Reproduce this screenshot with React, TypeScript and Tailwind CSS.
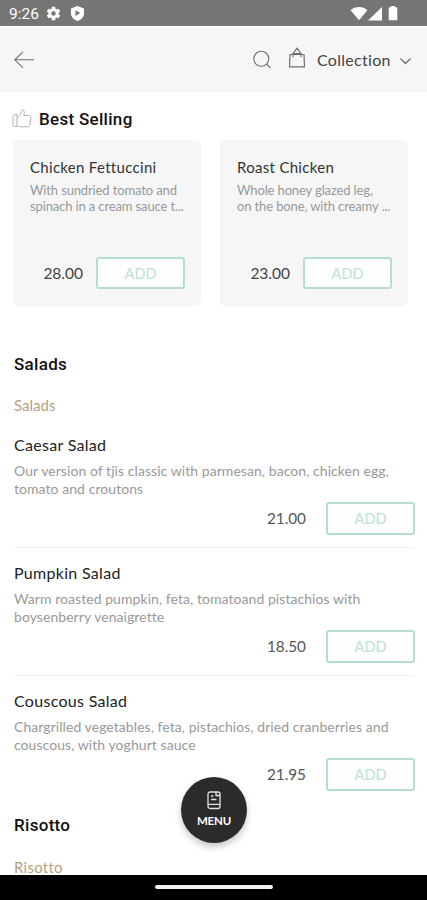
import React from 'react';

type Dish = {
  name: string;
  lines: string[];
  price: string;
};

const bestSelling: Dish[] = [
  { name: 'Chicken Fettuccini', lines: ['With sundried tomato and', 'spinach in a cream sauce t...'], price: '28.00' },
  { name: 'Roast Chicken', lines: ['Whole honey glazed leg,', 'on the bone, with creamy ...'], price: '23.00' },
];

const salads: Dish[] = [
  {
    name: 'Caesar Salad',
    lines: ['Our version of tjis classic with parmesan, bacon, chicken egg,', 'tomato and croutons'],
    price: '21.00',
  },
  {
    name: 'Pumpkin Salad',
    lines: ['Warm roasted pumpkin, feta, tomatoand pistachios with', 'boysenberry venaigrette'],
    price: '18.50',
  },
  {
    name: 'Couscous Salad',
    lines: ['Chargrilled vegetables, feta, pistachios, dried cranberries and', 'couscous, with yoghurt sauce'],
    price: '21.95',
  },
];

function StatusBar() {
  return (
    <div className="flex h-[26px] shrink-0 items-center bg-[#757575] pl-[9px] pr-[29px] pt-[2px] text-white">
      <span className="mt-[2px] w-[30px] font-['Roboto',sans-serif] text-[15.5px] leading-none">9:26</span>
      <svg className="ml-[6px] -mt-px" width="17" height="17" viewBox="0 0 24 24" fill="currentColor">
        <path d="M19.14 12.94a7.5 7.5 0 0 0 0-1.88l2.03-1.58a.5.5 0 0 0 .12-.61l-1.92-3.32a.5.5 0 0 0-.59-.22l-2.39.96a7 7 0 0 0-1.62-.94l-.36-2.54a.5.5 0 0 0-.48-.41h-3.84a.5.5 0 0 0-.47.41l-.36 2.54a7 7 0 0 0-1.62.94l-2.39-.96a.5.5 0 0 0-.59.22L2.74 8.87a.5.5 0 0 0 .12.61l2.03 1.58a7.5 7.5 0 0 0 0 1.88l-2.03 1.58a.5.5 0 0 0-.12.61l1.92 3.32c.12.22.37.29.59.22l2.39-.96c.5.38 1.03.7 1.62.94l.36 2.54c.05.24.24.41.48.41h3.84c.24 0 .44-.17.47-.41l.36-2.54a7 7 0 0 0 1.62-.94l2.39.96c.22.08.47 0 .59-.22l1.92-3.32a.5.5 0 0 0-.12-.61zM12 15.2a3.2 3.2 0 1 1 0-6.4 3.2 3.2 0 0 1 0 6.4z" />
      </svg>
      <svg className="ml-[8px] -mt-px" width="15" height="17" viewBox="0 0 15 17">
        <path d="M7.5 1 14 3.4v5.1c0 3.4-2.7 6.2-6.5 7.5C3.7 14.7 1 11.9 1 8.5V3.4z" fill="currentColor" />
        <path d="M5.5 5.3v5.6L10.3 8.1z" fill="#757575" />
      </svg>
      <div className="-mt-[2px] ml-auto flex items-center">
        <svg width="18" height="15" viewBox="0 0 18 15" fill="currentColor">
          <path d="M.6 4.2C3 2 5.8 1 9 1s6 1 8.4 3.2L9 14.3z" />
        </svg>
        <svg className="-ml-px" width="16" height="15" viewBox="0 0 16 15" fill="currentColor">
          <path d="M15 1v13.5H1z" />
        </svg>
        <svg className="ml-[5px]" width="10" height="16" viewBox="0 0 10 16" fill="currentColor">
          <path d="M3 1h4v1.3h1.400c.5 0 .9.400.9.900v11.200c0 .5-.4.900-.9.900H1.600a.9.900 0 0 1-.9-.9V3.200c0-.5.400-.9.900-.9H3z" />
        </svg>
      </div>
    </div>
  );
}

function Header() {
  return (
    <header className="flex h-[66px] shrink-0 items-center border-t border-[#fcfcfc] bg-[#f6f6f6] pl-[13px] pr-[15px] text-[#707070]">
      <svg width="22" height="20" viewBox="0 0 22 20" fill="none" stroke="currentColor" strokeWidth="1.1">
        <path d="M10 1.800 1.800 9.800l8.200 8M1.800 9.800H21" />
      </svg>
      <svg className="ml-auto" width="20" height="20" viewBox="0 0 20 20" fill="none" stroke="currentColor" strokeWidth="1.1">
        <circle cx="9.300" cy="8.800" r="7.500" />
        <path d="m14.500 14 4 4" />
      </svg>
      <svg className="-mt-[4px] ml-[16px]" width="18" height="21" viewBox="0 0 18 21" fill="none" stroke="currentColor" strokeWidth="1.2">
        <path d="M2 7.500h14l.5 12.300h-15z" />
        <path d="M5 10V6.500L9 1.300l4 5.200V10M5 6.500h8" />
      </svg>
      <span className="ml-[11px] w-[75px] text-[16px] leading-5 tracking-[0.3px] text-[#444]">Collection</span>
      <svg className="ml-[7px] mt-[3px]" width="13" height="9" viewBox="0 0 13 9" fill="none" stroke="currentColor" strokeWidth="1.3">
        <path d="m1.500 1.500 5 5 5-5" />
      </svg>
    </header>
  );
}

function ThumbIcon() {
  return (
    <svg width="20" height="19" viewBox="0 0 20 19" fill="none" stroke="#b0b0b0" strokeWidth="1" strokeLinejoin="round">
      <path d="M5 5.500H3.200A2.200 2.200 0 0 0 1 7.700v7.600a2.200 2.200 0 0 0 2.200 2.200H5z" />
      <path d="M5 8.500c2-.8 3.800-2.500 4-5 .1-1.600.5-2.600 1.500-2.600 1.900 0 2.200 3 1.300 5.600h4.700c1.600 0 2.600 1 2.400 2.400l-1 6.600c-.2 1.500-1.200 2.300-2.600 2.300H8.500c-1.500 0-2.500-.4-3.500-1.300" />
    </svg>
  );
}

function AddButton({ className = '' }: { className?: string }) {
  return (
    <button className={`w-[89px] rounded-[3px] border-2 border-[#b5decb] bg-[#fdfefd] text-[14.5px] text-[#bde3d1] ${className}`}>
      ADD
    </button>
  );
}

function BestCard({ dish }: { dish: Dish }) {
  return (
    <div className="flex h-[166px] w-[188px] flex-col rounded-[6px] border border-[#f4f4f4] bg-[#f6f6f6] pb-[16px] pl-[16px] pr-[15px] pt-[16px]">
      <h3 className="text-[15px] leading-5 tracking-[0.3px] text-[#333]">{dish.name}</h3>
      <div className="mt-[5px] text-[13px] leading-4 tracking-[-0.13px] text-[#999]">
        {dish.lines.map((line) => (
          <p key={line} className="whitespace-nowrap">{line}</p>
        ))}
      </div>
      <div className="mt-auto flex items-center justify-end gap-[13px]">
        <span className="mt-[2px] text-[15.5px] text-[#444]">{dish.price}</span>
        <AddButton className="h-[32px] pt-px" />
      </div>
    </div>
  );
}

function DishRow({ dish, last }: { dish: Dish; last?: boolean }) {
  return (
    <li className={`h-[128px] border-b pt-[15px] ${last ? 'border-transparent' : 'border-[#f1f1f1]'}`}>
      <h3 className="text-[16px] leading-5 tracking-[0.3px] text-[#222]">{dish.name}</h3>
      <div className="mt-[7px] text-[14px] leading-[17.5px] tracking-[0.06px] text-[#999]">
        {dish.lines.map((line) => (
          <p key={line} className="whitespace-nowrap">{line}</p>
        ))}
      </div>
      <div className="-mr-[2px] mt-[5px] flex items-center justify-end gap-[20px]">
        <span className="text-[15.3px] text-[#555]">{dish.price}</span>
        <AddButton className="h-[33px]" />
      </div>
    </li>
  );
}

function SectionTitle({ children }: { children: React.ReactNode }) {
  return <h2 className="font-['Roboto',sans-serif] text-[17px] font-medium leading-6 tracking-[0.3px] text-[#111]">{children}</h2>;
}

function MenuButton() {
  return (
    <button className="absolute left-[181px] top-[777px] flex size-[66px] flex-col items-center rounded-full bg-[#2b2b2b] pt-[14px] text-white shadow-[0_4px_7px_rgba(0,0,0,0.22)]">
      <svg width="14" height="19" viewBox="0 0 14 19" fill="none" stroke="#e2e2e2" strokeWidth="1.3" strokeLinejoin="round">
        <rect x="1" y="1" width="12" height="16.500" rx="2" />
        <path d="M1 13.300h12M9 1v3.500h4M4 5h2.500M4 8.500h5.500" />
      </svg>
      <span className="mt-[4px] text-[11.5px] font-bold leading-[14px] tracking-[-0.2px]">MENU</span>
    </button>
  );
}

export default function App() {
  return (
    <div className="relative flex h-[900px] w-[427px] flex-col overflow-hidden bg-white font-['Lato',sans-serif]">
      <StatusBar />
      <Header />
      <main className="min-h-0 flex-1 overflow-hidden pl-[13px]">
        <div className="-ml-px flex h-[48px] items-center gap-[7px] pt-[5px]">
          <ThumbIcon />
          <SectionTitle>Best Selling</SectionTitle>
        </div>
        <div className="flex gap-[19px]">
          {bestSelling.map((dish) => (
            <BestCard key={dish.name} dish={dish} />
          ))}
        </div>
        <section className="mt-[46px] pl-px pr-[14px]">
          <SectionTitle>Salads</SectionTitle>
          <p className="mt-[19px] h-[25px] text-[15px] leading-5 text-[#b5a180]">Salads</p>
          <ul>
            {salads.map((dish, i) => (
              <DishRow key={dish.name} dish={dish} last={i === salads.length - 1} />
            ))}
          </ul>
        </section>
        <section className="mt-[9px] pl-px">
          <SectionTitle>Risotto</SectionTitle>
          <p className="mt-[20px] text-[15px] leading-5 tracking-[0.25px] text-[#b5a180]">Risotto</p>
        </section>
      </main>
      <nav className="flex h-[25px] shrink-0 justify-center bg-black pt-[10px]">
        <div className="h-[4px] w-[118px] rounded-full bg-[#f2f2f2]" />
      </nav>
      <MenuButton />
    </div>
  );
}
